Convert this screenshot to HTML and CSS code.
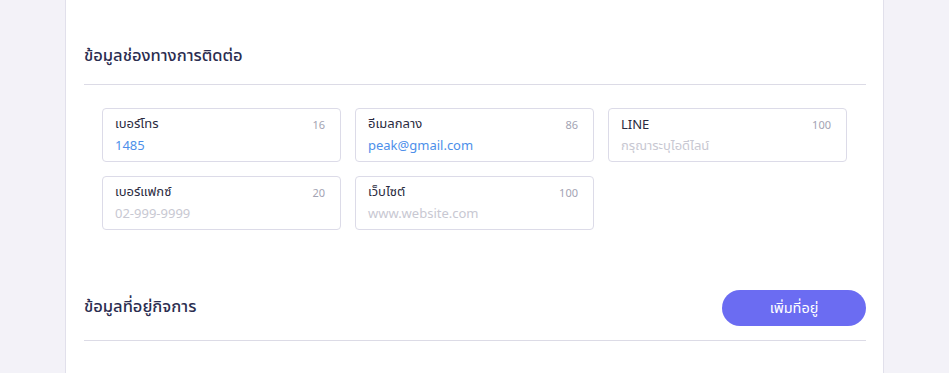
FILE: index.html
```html
<!DOCTYPE html>
<html>
<head>
    <title>ข้อมูลกิจการ</title>
    <link rel="stylesheet" href="styles.css">
</head>
<body>
    <div class="page">
        <div class="panel">
            <div class="section-head">
                <h2>ข้อมูลช่องทางการติดต่อ</h2>
            </div>
            <div class="fields">
                <div class="field">
                    <div class="field-top"><span class="label">เบอร์โทร</span><span class="count">16</span></div>
                    <div class="value">1485</div>
                </div>
                <div class="field">
                    <div class="field-top"><span class="label">อีเมลกลาง</span><span class="count">86</span></div>
                    <div class="value">peak@gmail.com</div>
                </div>
                <div class="field">
                    <div class="field-top"><span class="label">LINE</span><span class="count">100</span></div>
                    <div class="value empty">กรุณาระบุไอดีไลน์</div>
                </div>
                <div class="field">
                    <div class="field-top"><span class="label">เบอร์แฟกซ์</span><span class="count">20</span></div>
                    <div class="value empty">02-999-9999</div>
                </div>
                <div class="field">
                    <div class="field-top"><span class="label">เว็บไซต์</span><span class="count">100</span></div>
                    <div class="value empty">www.website.com</div>
                </div>
            </div>
            <div class="section-head address">
                <h2>ข้อมูลที่อยู่กิจการ</h2>
                <button class="add-btn">เพิ่มที่อยู่</button>
            </div>
        </div>
    </div>
</body>
</html>
```

FILE: styles.css
```css
body {
    margin: 0;
    font-family: "Noto Sans", "Noto Sans Thai", "Noto Sans CJK SC", sans-serif;
    background-color: #f3f2f8;
}

.page {
    min-height: 373px;
}

.panel {
    box-sizing: border-box;
    margin-left: 65px;
    width: 819px;
    min-height: 373px;
    background-color: white;
    border-left: 1px solid #e1e0eb;
    border-right: 1px solid #e1e0eb;
    padding: 0 17px 0 18px;
}

.section-head {
    display: flex;
    align-items: center;
    justify-content: space-between;
    padding: 43px 0 17px;
    border-bottom: 1px solid #dcdbe6;
}

.section-head h2 {
    margin: 0;
    font-size: 16.5px;
    line-height: 24px;
    font-weight: 500;
    color: #2b2d50;
}

.section-head.address {
    padding: 60px 0 14px;
}

.section-head.address h2 {
    margin-bottom: 4px;
}

.fields {
    display: grid;
    grid-template-columns: repeat(3, 239px);
    gap: 14px;
    padding: 23px 18px 0;
}

.field {
    height: 52px;
    border: 1px solid #dcdbe8;
    border-radius: 4px;
    padding: 0 15px 0 12px;
}

.field-top {
    display: flex;
    justify-content: space-between;
    align-items: center;
    margin-top: 5px;
    height: 20px;
}

.label {
    font-size: 13px;
    color: #2a2a40;
}

.count {
    font-size: 11px;
    color: #a3a3b3;
}

.value {
    margin-top: 1px;
    font-size: 13px;
    line-height: 20px;
    color: #4d8fea;
}

.value.empty {
    color: #c8c8d2;
}

.add-btn {
    width: 144px;
    height: 36px;
    border: none;
    border-radius: 18px;
    background-color: #6b6cf2;
    color: white;
    font-family: inherit;
    font-size: 14.5px;
    cursor: pointer;
}
```
